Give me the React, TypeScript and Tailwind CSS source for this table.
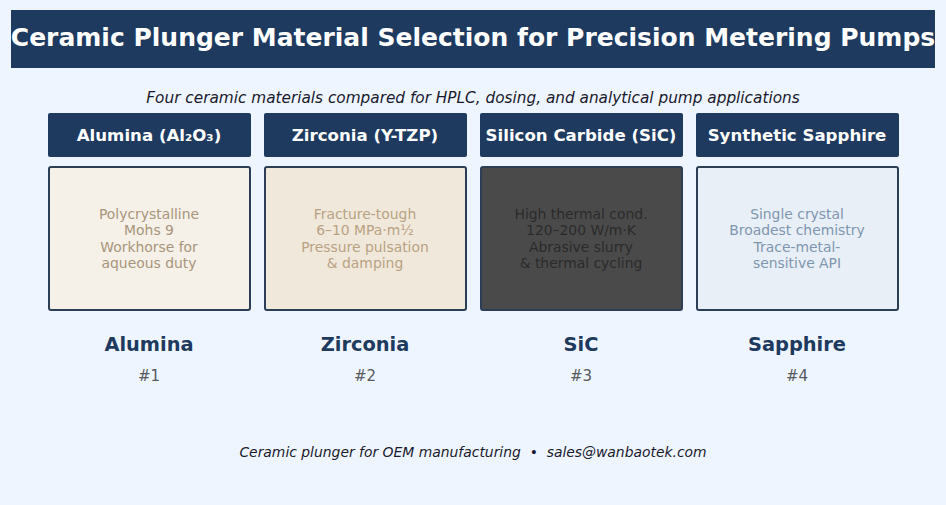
import React from "react";

const items = [
  {
    head: "Alumina (Al₂O₃)",
    bg: "bg-[#f5f0e8]",
    tc: "text-[#a8957a]",
    lines: ["Polycrystalline", "Mohs 9", "Workhorse for", "aqueous duty"],
    label: "Alumina",
    n: "#1",
  },
  {
    head: "Zirconia (Y-TZP)",
    bg: "bg-[#f0e8da]",
    tc: "text-[#b9a283]",
    lines: ["Fracture-tough", "6–10 MPa·m½", "Pressure pulsation", "& damping"],
    label: "Zirconia",
    n: "#2",
  },
  {
    head: "Silicon Carbide (SiC)",
    bg: "bg-[#4a4a4a]",
    tc: "text-[#2a2a2a]",
    lines: ["High thermal cond.", "120–200 W/m·K", "Abrasive slurry", "& thermal cycling"],
    label: "SiC",
    n: "#3",
  },
  {
    head: "Synthetic Sapphire",
    bg: "bg-[#e8eff7]",
    tc: "text-[#7f96ae]",
    lines: ["Single crystal", "Broadest chemistry", "Trace-metal-", "sensitive API"],
    label: "Sapphire",
    n: "#4",
  },
];

export default function App() {
  return (
    <div
      className="w-[946px] h-[505px] bg-[#eff5fe] overflow-hidden flex flex-col items-center"
      style={{ fontFamily: '"DejaVu Sans", Verdana, sans-serif' }}
    >
      <div className="mt-[10px] w-[924px] h-[58px] pb-[3px] bg-[#1e3a5f] flex items-center justify-center shrink-0">
        <h1 className="whitespace-nowrap text-white font-bold text-[25px] leading-none">
          Ceramic Plunger Material Selection for Precision Metering Pumps
        </h1>
      </div>
      <p className="mt-[20px] italic text-[15.3px] leading-[20px] text-[#1a1a2e] whitespace-nowrap">
        Four ceramic materials compared for HPLC, dosing, and analytical pump applications
      </p>
      <div className="mt-[5px] grid grid-cols-4 gap-x-[13px]">
        {items.map((it) => (
          <div key={it.label} className="w-[203px] flex flex-col items-center">
            <div className="w-full h-[44px] pt-[2px] bg-[#1e3a5f] rounded-[2px] flex items-center justify-center text-white font-bold text-[16.6px] whitespace-nowrap">
              {it.head}
            </div>
            <div
              className={`mt-[9px] w-full h-[145px] border-2 border-[#2c3e55] rounded-[3px] flex flex-col items-center justify-center text-[13.9px] leading-[16.3px] ${it.bg} ${it.tc}`}
            >
              {it.lines.map((l) => (
                <div key={l} className="whitespace-nowrap">{l}</div>
              ))}
            </div>
            <div className="mt-[22px] text-[19.4px] leading-[24px] font-bold text-[#1e3a5f]">{it.label}</div>
            <div className="mt-[9px] text-[15px] leading-[20px] text-[#555a60]">{it.n}</div>
          </div>
        ))}
      </div>
      <p className="mt-[56px] italic text-[13.9px] leading-[20px] text-[#1a1a2e] whitespace-pre">
        {"Ceramic plunger for OEM manufacturing  •  sales@wanbaotek.com"}
      </p>
    </div>
  );
}
